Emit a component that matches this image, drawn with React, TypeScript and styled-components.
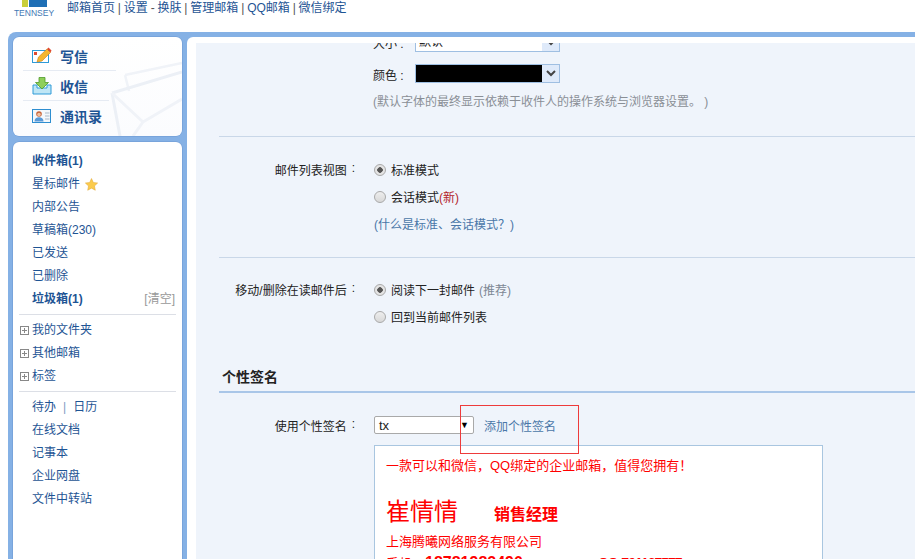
import React from 'react';
import styled, { createGlobalStyle } from 'styled-components';

const GlobalStyle = createGlobalStyle`
  html, body {
    margin: 0;
    padding: 0;
    width: 915px;
    height: 559px;
    overflow: hidden;
    background: #fff;
    font-family: "Liberation Sans", "Noto Sans CJK SC", sans-serif;
    font-size: 12px;
    color: #000;
  }
`;

const Page = styled.div`
  width: 915px;
  height: 559px;
  display: flex;
  flex-direction: column;
  overflow: hidden;
  position: relative;
`;

const Header = styled.div`
  height: 32px;
  flex: none;
  display: flex;
  align-items: flex-start;
  padding-left: 15px;
`;

const LogoBox = styled.div`
  width: 38px;
  display: flex;
  flex-direction: column;
  align-items: center;
`;

const LogoMarks = styled.div`
  height: 7px;
  display: flex;
  justify-content: center;
  gap: 1px;
  margin-bottom: 1px;
`;

const LogoMark = styled.div<{ $color: string; $w: number }>`
  width: ${(p) => p.$w}px;
  height: 7px;
  background: ${(p) => p.$color};
`;

const LogoText = styled.div`
  font-size: 8.5px;
  line-height: 10px;
  color: #3f78b4;
  white-space: nowrap;
`;

const TopNav = styled.div`
  margin: 1px 0 0 14px;
  font-size: 12px;
  line-height: 14px;
  color: #555;
  white-space: nowrap;
  word-spacing: -0.5px;
`;

const TopLink = styled.span`
  color: #1e5494;
`;

const Frame = styled.div`
  flex: 1;
  min-height: 0;
  margin-left: 8px;
  padding: 5px 0 0 5px;
  background: #85b1e5;
  border-top-left-radius: 8px;
  display: flex;
  gap: 5px;
`;

const Sidebar = styled.div`
  width: 169px;
  flex: none;
  display: flex;
  flex-direction: column;
  gap: 6px;
`;

const Panel = styled.div`
  background: #fff;
  border-radius: 6px 6px 0 0;
  box-shadow: 0 0 0 0.5px #6c98d2;
`;

const ActionPanel = styled(Panel)`
  height: 99px;
  box-sizing: border-box;
  border-radius: 6px;
  padding: 4px 10px 0;
  position: relative;
  overflow: hidden;
  display: flex;
  flex-direction: column;
  background: linear-gradient(#fff, #fbfcfe);
`;

const Watermark = styled.svg`
  position: absolute;
  left: 92px;
  top: 22px;
`;

const ActionRow = styled.div<{ $line?: number }>`
  height: 30px;
  box-sizing: border-box;
  flex: none;
  display: flex;
  align-items: center;
  padding-left: 9px;
  gap: 8px;
  position: relative;
  border-bottom: ${(p) => (p.$line ? '1px solid #e6ebf3' : 'none')};
  width: ${(p) => (p.$line ? `${p.$line}px` : 'auto')};
`;

const ActionIcon = styled.svg`
  flex: none;
`;

const ActionLabel = styled.span`
  font-size: 14px;
  font-weight: bold;
  color: #1e5494;
`;

const FolderPanel = styled(Panel)`
  flex: 1;
  min-height: 0;
  padding: 8px 6px 0;
`;

const FolderRow = styled.div<{ $bold?: boolean }>`
  height: 23px;
  line-height: 23px;
  padding-left: 13px;
  display: flex;
  align-items: center;
  gap: 5px;
  color: #1e5494;
  font-weight: ${(p) => (p.$bold ? 'bold' : 'normal')};
`;

const ClearLink = styled.span`
  margin-left: auto;
  padding-right: 1px;
  font-weight: normal;
  color: #999;
`;

const Divider = styled.div`
  height: 1px;
  background: #dcdfe6;
  margin: 3px 0 0;
`;

const TreeGroup = styled.div`
  padding-top: 4px;
`;

const TreeRow = styled(FolderRow)`
  padding-left: 1px;
  gap: 3px;
`;

const Plus = styled.span`
  width: 7px;
  height: 7px;
  border: 1px solid #888;
  position: relative;
  flex: none;
  &::before {
    content: '';
    position: absolute;
    left: 1px;
    right: 1px;
    top: 3px;
    height: 1px;
    background: #888;
  }
  &::after {
    content: '';
    position: absolute;
    top: 1px;
    bottom: 1px;
    left: 3px;
    width: 1px;
    background: #888;
  }
`;

const ToolGroup = styled.div`
  padding-top: 4px;
`;

const Sep = styled.span`
  color: #7d9cc4;
  margin: 0 7px;
`;

const Main = styled.div`
  flex: 1;
  min-width: 0;
  background: #fff;
  border-top-left-radius: 6px;
  padding: 6px 0 0 9px;
  display: flex;
`;

const Scroller = styled.div`
  flex: 1;
  background: #eff4fb;
  overflow: hidden;
  padding-left: 23px;
`;

const Content = styled.div`
  margin-top: -11px;
`;

const Section = styled.div<{ $h: number; $pt?: number }>`
  height: ${(p) => p.$h}px;
  padding-top: ${(p) => p.$pt ?? 0}px;
  border-bottom: 1px solid #c9d7e8;
  box-sizing: border-box;
`;

const FormRow = styled.div<{ $h?: number; $mt?: number }>`
  display: flex;
  align-items: center;
  height: ${(p) => p.$h ?? 27}px;
  margin-top: ${(p) => p.$mt ?? 0}px;
`;

const Label = styled.div`
  width: 136px;
  flex: none;
  display: flex;
  justify-content: flex-end;
  color: #222;
  white-space: nowrap;
`;

const Colon = styled.span`
  margin-left: 5px;
`;

const Field = styled.div<{ $indent?: boolean }>`
  margin-left: ${(p) => (p.$indent ? 154 : 18)}px;
  display: flex;
  align-items: center;
  white-space: nowrap;
  color: #222;
`;

const SelectBox = styled.div<{ $black?: boolean }>`
  width: 143px;
  height: 17px;
  border: 1px solid #9fbfe2;
  display: flex;
  background: ${(p) => (p.$black ? '#000' : '#fff')};
  margin-left: 6px;
`;

const SelectText = styled.span`
  flex: 1;
  padding-left: 3px;
  line-height: 16px;
`;

const SelectArrow = styled.span`
  width: 17px;
  flex: none;
  background: #dfeafa;
  display: flex;
  align-items: center;
  justify-content: center;
`;

const InlineLabel = styled.span`
  color: #222;
  width: 36px;
  padding-top: 1px;
`;

const Hint = styled.div`
  color: #8a8f96;
  white-space: pre;
  margin-top: -2px;
`;

const Radio = styled.span<{ $on?: boolean }>`
  width: 10px;
  height: 10px;
  border-radius: 50%;
  border: 1px solid #a9a9a9;
  background: ${(p) => (p.$on ? 'radial-gradient(circle, #555 0 2.5px, #e4e4e4 3px)' : 'linear-gradient(#eee, #d8d8d8)')};
  margin: 0 5px 0 1px;
  flex: none;
`;

const NewTag = styled.span`
  color: #b3232a;
`;

const HelpLink = styled.span`
  color: #4a77a8;
  margin-left: 1px;
`;

const Recommend = styled.span`
  color: #7d8794;
  margin-left: 4px;
`;

const SectionTitle = styled.div`
  height: 23px;
  margin-top: 38px;
  border-bottom: 2px solid #a9c6e8;
  font-size: 14px;
  font-weight: bold;
  color: #222;
  padding-left: 3px;
  line-height: 18px;
`;

const SigSelect = styled.div`
  width: 90px;
  height: 16px;
  border: 1px solid #a9a9a9;
  border-radius: 2px;
  background: #fff;
  display: flex;
  align-items: center;
  justify-content: space-between;
  padding: 0 4px;
  margin-left: 1px;
  font-size: 13px;
  color: #222;
`;

const SigCaret = styled.span`
  font-size: 9px;
  color: #000;
`;

const AddLink = styled.span`
  margin-left: 10px;
  color: #4a77a8;
`;

const SigBox = styled.div`
  margin: 3px 0 0 155px;
  width: 449px;
  height: 140px;
  background: #fff;
  border: 1px solid #a9c6e0;
  box-sizing: border-box;
  padding: 11px;
  color: #f00;
  overflow: hidden;
`;

const SigLine = styled.div<{ $mt?: number }>`
  font-family: "Liberation Sans", "Noto Sans CJK SC", sans-serif;
  font-size: 13px;
  line-height: 18px;
  margin-top: ${(p) => p.$mt ?? 0}px;
  white-space: nowrap;
`;

const SigName = styled.span`
  font-size: 24px;
  line-height: 30px;
`;

const SigTitle = styled.span`
  font-size: 16px;
  font-weight: bold;
  margin-left: 36px;
`;

const PhoneNo = styled.span`
  font-size: 16px;
  font-weight: bold;
`;

const QqNo = styled.span`
  font-size: 14px;
  font-weight: bold;
  letter-spacing: -1px;
  margin-left: 75px;
`;

const HighlightBox = styled.div`
  position: absolute;
  left: 460px;
  top: 405px;
  width: 117px;
  height: 47px;
  border: 1px solid #ee3b3b;
`;

const Chevron = () => (
  <svg width="10" height="7" viewBox="0 0 10 7">
    <path d="M1 1l4 4 4-4" fill="none" stroke="#444" strokeWidth="2" />
  </svg>
);

const folders = ['星标邮件', '内部公告', '草稿箱(230)', '已发送', '已删除'];
const tools = ['在线文档', '记事本', '企业网盘', '文件中转站'];
const trees = ['我的文件夹', '其他邮箱', '标签'];

const App: React.FC = () => (
  <Page>
    <GlobalStyle />
    <Header>
      <LogoBox>
        <LogoMarks>
          <LogoMark $color="#c9cf3a" $w={6} />
          <LogoMark $color="#1f6fb5" $w={18} />
        </LogoMarks>
        <LogoText>TENNSEY</LogoText>
      </LogoBox>
      <TopNav>
        <TopLink>邮箱首页</TopLink> | <TopLink>设置</TopLink> - <TopLink>换肤</TopLink> | <TopLink>管理邮箱</TopLink> | <TopLink>QQ邮箱</TopLink> | <TopLink>微信绑定</TopLink>
      </TopNav>
    </Header>
    <Frame>
      <Sidebar>
        <ActionPanel>
          <Watermark width="77" height="77" viewBox="0 0 77 77">
            <path d="M20 16L77 4M20 16l4 16" fill="none" stroke="#f0f3f8" strokeWidth="2.500" />
            <path d="M7 34L77 13M7 34l8 43" fill="none" stroke="#ecf0f6" strokeWidth="3" />
            <path d="M7 34l31 29 39-23M38 63L28 77" fill="none" stroke="#f0f3f8" strokeWidth="3" />
          </Watermark>
          <ActionRow $line={93}>
            <ActionIcon width="20" height="17" viewBox="0 0 20 17">
              <rect x="0.500" y="3.500" width="16" height="12" fill="#fff" stroke="#2e9bd8" />
              <rect x="2" y="5" width="3" height="3" fill="#e0492f" />
              <path d="M5 15l1.500-5L15 2l3.500 3.500L10 14z" fill="#f5b62c" stroke="#c97a12" strokeWidth="0.600" />
              <path d="M15 2l1.500-1.500 3 3L18.500 5.500z" fill="#e0492f" />
            </ActionIcon>
            <ActionLabel>写信</ActionLabel>
          </ActionRow>
          <ActionRow $line={86}>
            <ActionIcon width="20" height="18" viewBox="0 0 20 18">
              <path d="M1 8h4v3h10V8h4v9H1z" fill="#bfe6f5" stroke="#2e9bd8" />
              <path d="M7 0.500h6v5h3.500L10 12 3.500 5.500H7z" fill="#8fcf5a" stroke="#4e9a2a" strokeWidth="0.800" />
            </ActionIcon>
            <ActionLabel>收信</ActionLabel>
          </ActionRow>
          <ActionRow>
            <ActionIcon width="20" height="14" viewBox="0 0 20 14">
              <rect x="0.500" y="0.500" width="18" height="13" fill="#f4f8fc" stroke="#2e8ed0" />
              <circle cx="7" cy="5" r="2.800" fill="#c8643a" />
              <circle cx="7" cy="5.500" r="1.800" fill="#f0c0a0" />
              <path d="M2.500 12.500c0-3 2-4.200 4.500-4.200s4.500 1.200 4.500 4.200z" fill="#5a9ad8" />
              <path d="M13 4h4.500M13 7h4.500M13 10h4.500" stroke="#a8b8c8" />
            </ActionIcon>
            <ActionLabel>通讯录</ActionLabel>
          </ActionRow>
        </ActionPanel>
        <FolderPanel>
          <FolderRow $bold>收件箱(1)</FolderRow>
          {folders.map((f, i) => (
            <FolderRow key={f}>
              {f}
              {i === 0 && (
                <svg width="13" height="13" viewBox="0 0 24 24">
                  <path d="M12 1l3.400 7.300 7.900 1-5.800 5.400 1.500 7.900L12 18.700 5 22.600l1.500-7.900L.7 9.300l7.900-1z" fill="#fbcb4c" stroke="#e3a93a" />
                </svg>
              )}
            </FolderRow>
          ))}
          <FolderRow $bold>
            垃圾箱(1)
            <ClearLink>[清空]</ClearLink>
          </FolderRow>
          <Divider />
          <TreeGroup>
            {trees.map((t) => (
              <TreeRow key={t}>
                <Plus />
                {t}
              </TreeRow>
            ))}
          </TreeGroup>
          <Divider />
          <ToolGroup>
            <FolderRow>
              <span>
                待办<Sep>|</Sep>日历
              </span>
            </FolderRow>
            {tools.map((t) => (
              <FolderRow key={t}>{t}</FolderRow>
            ))}
          </ToolGroup>
        </FolderPanel>
      </Sidebar>
      <Main>
        <Scroller>
          <Content>
            <Section $h={105}>
              <FormRow $h={20}>
                <Field $indent>
                  <InlineLabel>大小 :</InlineLabel>
                  <SelectBox>
                    <SelectText>默认</SelectText>
                    <SelectArrow>
                      <Chevron />
                    </SelectArrow>
                  </SelectBox>
                </Field>
              </FormRow>
              <FormRow $h={19} $mt={12}>
                <Field $indent>
                  <InlineLabel>颜色 :</InlineLabel>
                  <SelectBox $black>
                    <SelectText />
                    <SelectArrow>
                      <Chevron />
                    </SelectArrow>
                  </SelectBox>
                </Field>
              </FormRow>
              <FormRow $h={36}>
                <Field $indent>
                  <Hint>(默认字体的最终显示依赖于收件人的操作系统与浏览器设置。 )</Hint>
                </Field>
              </FormRow>
            </Section>
            <Section $h={121} $pt={19}>
              <FormRow>
                <Label>
                  邮件列表视图<Colon>:</Colon>
                </Label>
                <Field>
                  <Radio $on />
                  标准模式
                </Field>
              </FormRow>
              <FormRow>
                <Field $indent>
                  <Radio />
                  会话模式<NewTag>(新)</NewTag>
                </Field>
              </FormRow>
              <FormRow>
                <Field $indent>
                  <HelpLink>(什么是标准、会话模式？)</HelpLink>
                </Field>
              </FormRow>
            </Section>
            <FormRow $mt={18}>
              <Label>
                移动/删除在读邮件后<Colon>:</Colon>
              </Label>
              <Field>
                <Radio $on />
                阅读下一封邮件<Recommend>(推荐)</Recommend>
              </Field>
            </FormRow>
            <FormRow>
              <Field $indent>
                <Radio />
                回到当前邮件列表
              </Field>
            </FormRow>
            <SectionTitle>个性签名</SectionTitle>
            <FormRow $h={34} $mt={15}>
              <Label>
                使用个性签名<Colon>:</Colon>
              </Label>
              <Field>
                <SigSelect>
                  tx<SigCaret>▼</SigCaret>
                </SigSelect>
                <AddLink>添加个性签名</AddLink>
              </Field>
            </FormRow>
            <SigBox>
              <SigLine>一款可以和微信，QQ绑定的企业邮箱，值得您拥有！</SigLine>
              <SigLine $mt={22}>
                <SigName>崔情情</SigName>
                <SigTitle>销售经理</SigTitle>
              </SigLine>
              <SigLine $mt={6}>上海腾曦网络服务有限公司</SigLine>
              <SigLine $mt={3}>
                手机：<PhoneNo>18781982490</PhoneNo>
                <QqNo>QQ:701167577</QqNo>
              </SigLine>
            </SigBox>
          </Content>
        </Scroller>
      </Main>
    </Frame>
    <HighlightBox />
  </Page>
);

export default App;
